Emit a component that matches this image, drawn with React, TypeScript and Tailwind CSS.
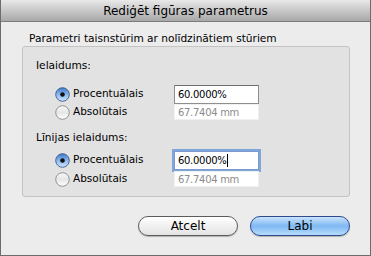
import React from "react";

function Radio({ on }: { on: boolean }) {
  return (
    <svg width="15" height="15" viewBox="0 0 15 15" className="shrink-0">
      <defs>
        <linearGradient id={on ? "rOn" : "rOff"} x1="0" y1="0" x2="0" y2="1">
          {on ? (
            <>
              <stop offset="0" stopColor="#3d78c8" />
              <stop offset="0.5" stopColor="#8ab8ee" />
              <stop offset="1" stopColor="#cfe6ff" />
            </>
          ) : (
            <>
              <stop offset="0" stopColor="#f8f8f8" />
              <stop offset="0.5" stopColor="#e6e6e6" />
              <stop offset="1" stopColor="#ffffff" />
            </>
          )}
        </linearGradient>
      </defs>
      <circle cx="7.5" cy="7.5" r="6.8" fill={`url(#${on ? "rOn" : "rOff"})`} stroke={on ? "#3a5a8c" : "#8a8a8a"} strokeWidth="0.9" />
      {on && <circle cx="7.5" cy="7.5" r="2.3" fill="#111" />}
    </svg>
  );
}

function Row({ label, on, value, disabled, focused }: { label: string; on: boolean; value: string; disabled?: boolean; focused?: boolean }) {
  return (
    <div className="flex items-center h-[18px]">
      <div className="flex items-center gap-[3px] w-[118px]">
        <Radio on={on} />
        <span className="text-[10.5px] text-black">{label}</span>
      </div>
      <div
        className={
          "w-[85px] ml-[1px] flex items-center pl-[3px] text-[10px] tracking-[-0.3px] " +
          (disabled
            ? "h-[16px] bg-white text-[#8c8c8c] border border-[#f0f0f0]"
            : focused
            ? "h-[19px] bg-white text-black border border-[#7b9ad0] shadow-[0_0_0_2px_#7fa6db]"
            : "h-[19px] bg-white text-black border border-[#8e8e8e] border-t-[#6f6f6f]")
        }
      >
        {value}
        {focused && <span className="inline-block w-[1px] h-[13px] bg-black ml-[1px]" />}
      </div>
    </div>
  );
}

export default function App() {
  return (
    <div
      className="w-[371px] h-[256px] overflow-hidden relative bg-[#e6e6e6] border-l border-r border-b border-[#6c6c6c] flex flex-col"
      style={{ fontFamily: '"DejaVu Sans", "Liberation Sans", sans-serif' }}
    >
      <div className="h-[22px] shrink-0 bg-gradient-to-b from-[#e9e9e9] to-[#a8a8a8] border-b border-[#7d7d7d] flex items-center justify-center text-[12px] text-black">
        Rediģēt figūras parametrus
      </div>
      <div className="flex-1 bg-[#ececec] pl-[21px] pt-[9px]">
        <div className="text-[10.6px] text-black pl-[7px] leading-[14px]">Parametri taisnstūrim ar nolīdzinātiem stūriem</div>
        <div className="mt-[1px] w-[328px] h-[151px] bg-[#e2e2e2] border border-[#c4c4c4] rounded-[3px] pl-[13px] pt-[11px]">
          <div className="text-[10.6px] text-black leading-[14px]">Ielaidums:</div>
          <div className="mt-[13px] pl-[19px] flex flex-col gap-[0px]">
            <Row label="Procentuālais" on value="60.0000%" />
            <Row label="Absolūtais" on={false} value="67.7404 mm" disabled />
          </div>
          <div className="mt-[9px] text-[10.6px] text-black leading-[14px]">Līnijas ielaidums:</div>
          <div className="mt-[7px] pl-[19px] flex flex-col gap-[1px]">
            <Row label="Procentuālais" on value="60.0000%" focused />
            <Row label="Absolūtais" on={false} value="67.7404 mm" disabled />
          </div>
        </div>
        <div className="flex gap-[12px] mt-[19px] pl-[116px]">
          <button className="w-[100px] h-[20px] rounded-full border border-[#5c5c5c] bg-gradient-to-b from-[#ffffff] via-[#f0f0f0] to-[#e4e4e4] text-[12px] text-black flex items-center justify-center shadow-[0_1px_1px_rgba(0,0,0,0.25)]">
            Atcelt
          </button>
          <button className="w-[100px] h-[20px] rounded-full border border-[#2d4b8e] bg-gradient-to-b from-[#c9e3fb] via-[#7fb8f2] to-[#b6dcfd] text-[12px] text-black flex items-center justify-center shadow-[0_1px_1px_rgba(0,0,0,0.25)]">
            Labi
          </button>
        </div>
      </div>
    </div>
  );
}
